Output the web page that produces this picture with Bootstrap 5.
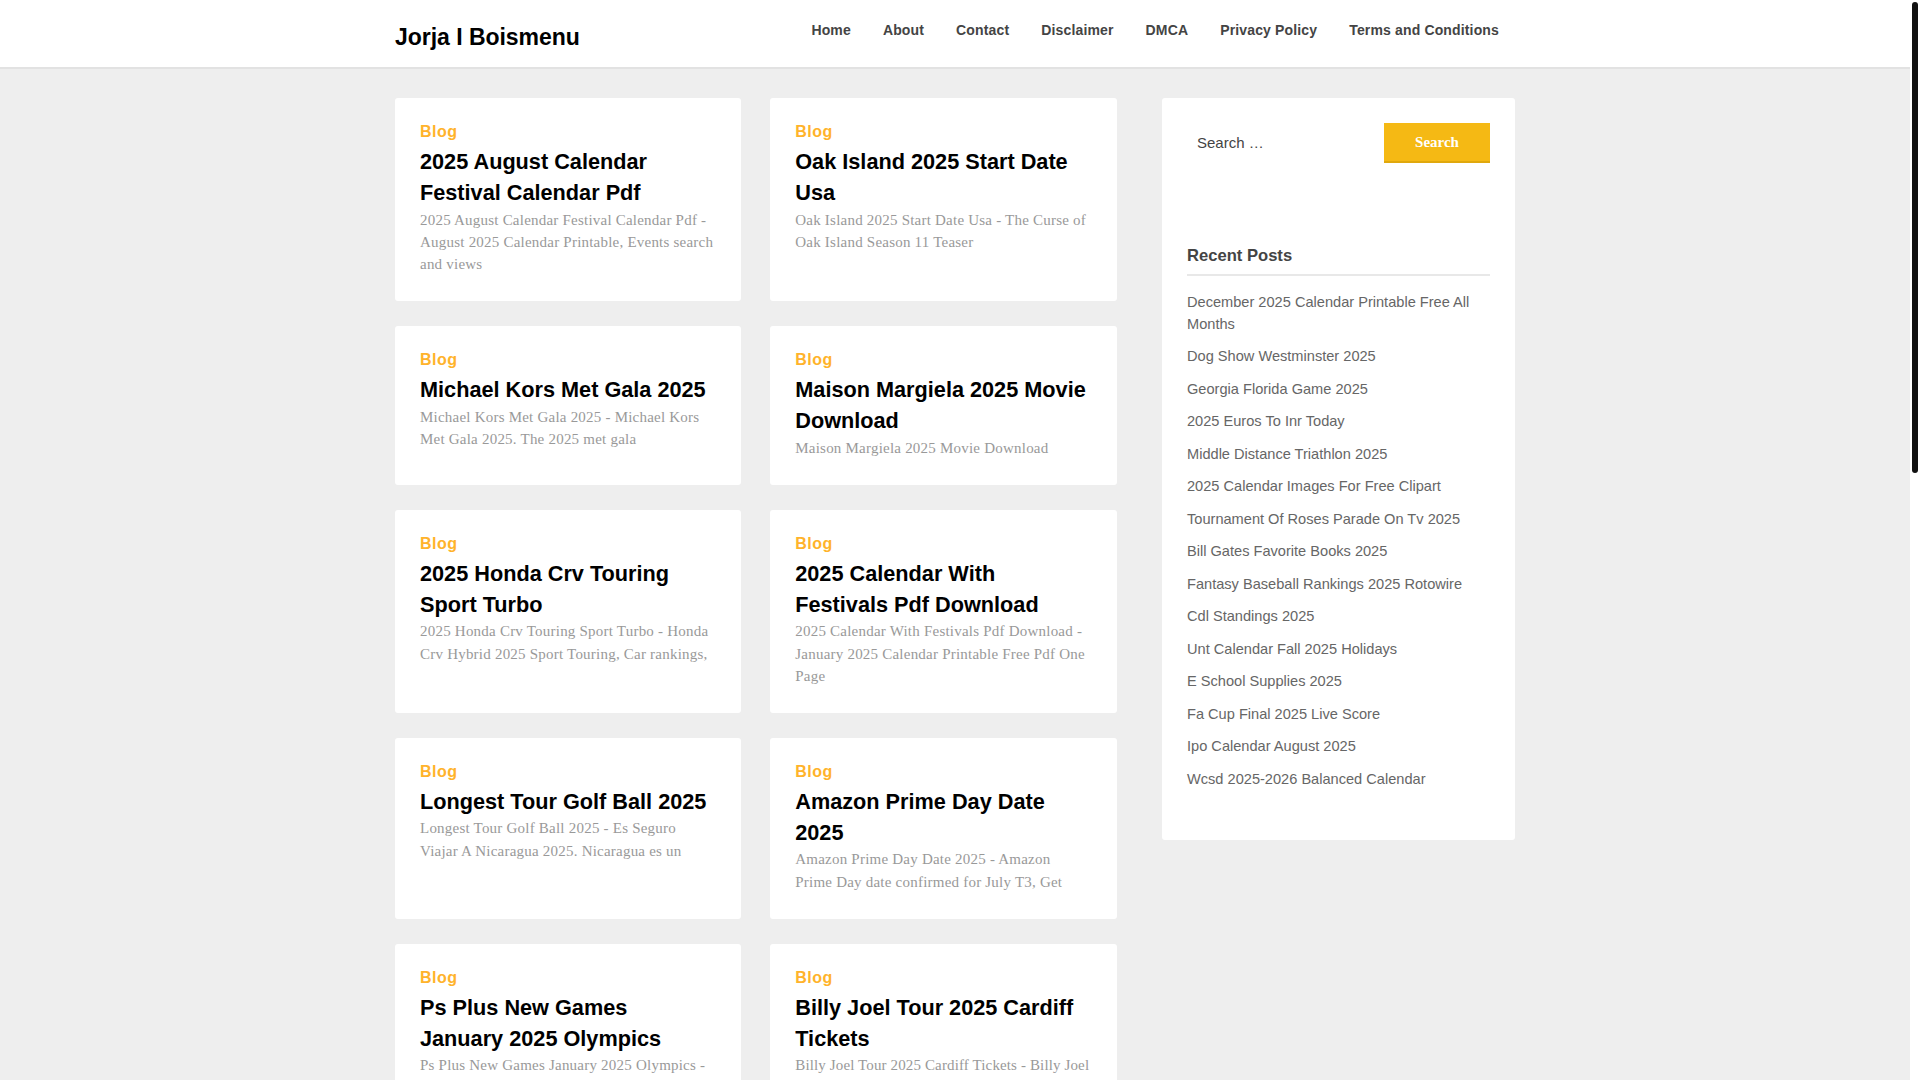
<!DOCTYPE html>
<html lang="en">
<head>
<meta charset="utf-8">
<title>Jorja I Boismenu</title>
<link href="https://cdn.jsdelivr.net/npm/bootstrap@5.3.0/dist/css/bootstrap.min.css" rel="stylesheet">
<style>
body{background:#eee;font-family:"Liberation Sans",Arial,sans-serif;color:#444;padding-right:10px}
.page-track{position:fixed;top:0;right:0;bottom:0;width:10px;background:#fff;z-index:5}
.page-thumb{width:6px;height:471px;margin:2px 0 0 2px;background:#111;border-radius:3px}
.site-wrap{width:1120px;margin:0 auto}
.site-head{background:#fff;height:69px;border-bottom:2px solid #e2e2e2}
.site-logo{font-size:23px;font-weight:700;color:#000;text-decoration:none;line-height:1;margin-top:26px;letter-spacing:-.03px}
.top-link{font-size:14px;font-weight:700;color:#444;text-decoration:none;padding:0 16px;letter-spacing:.15px;line-height:1;margin-top:23px}
.site-body{padding-top:29px;gap:45.5px}
.post-col{width:721.5px}
.post-grid{--bs-gutter-x:29px;--bs-gutter-y:25px}
.post-box{background:#fff;border-radius:3px;padding:22px 25px 25.5px;height:100%}
.post-cat{font-size:16px;font-weight:700;letter-spacing:.5px;color:#ffb32b;text-decoration:none;line-height:24px;display:block}
.post-title{font-size:21.7px;font-weight:700;line-height:31px;color:#000;margin:2px 0 .5px}
.post-text{font-family:"Liberation Serif",serif;font-size:15px;line-height:22.4px;color:#999;letter-spacing:.22px;margin:0}
.post-text.text-snug{letter-spacing:.13px}
.side-box{background:#fff;border-radius:3px;width:353px;padding:25px;height:742px}
.search-field{border:0;background:transparent;padding:0 0 0 10px;width:100%;font-size:15px;color:#444;outline:0}
.search-field::placeholder{color:#444;opacity:1}
.search-go{background:#f5b914;border:0;border-bottom:2px solid #e0a80d;border-radius:0;width:106px;height:40px;flex:none;font-family:"Liberation Serif",serif;font-weight:700;font-size:15px;color:#fff;padding:0}
.side-title{font-size:16.6px;font-weight:700;color:#444;margin:81px 0 0;padding-bottom:5.5px;border-bottom:2px solid #e8e8e8;line-height:24px}
.side-links{list-style:none;margin:15px 0 0;padding:0;font-size:14.6px;line-height:22px}
.side-links li{margin-bottom:10.5px}
.side-links a{color:#666;text-decoration:none}
</style>
</head>
<body>
<div class="page-track"><div class="page-thumb"></div></div>
<header class="site-head">
  <div class="site-wrap d-flex justify-content-between align-items-start">
    <a class="site-logo" href="#">Jorja I Boismenu</a>
    <nav class="d-flex">
      <a class="top-link" href="#">Home</a>
      <a class="top-link" href="#">About</a>
      <a class="top-link" href="#">Contact</a>
      <a class="top-link" href="#">Disclaimer</a>
      <a class="top-link" href="#">DMCA</a>
      <a class="top-link" href="#">Privacy Policy</a>
      <a class="top-link" href="#">Terms and Conditions</a>
    </nav>
  </div>
</header>
<div class="site-wrap site-body d-flex align-items-start">
  <main class="post-col">
    <div class="row post-grid">
      <div class="col-6"><article class="post-box"><a class="post-cat" href="#">Blog</a><h2 class="post-title">2025 August Calendar Festival Calendar Pdf</h2><p class="post-text">2025 August Calendar Festival Calendar Pdf - August 2025 Calendar Printable, Events search and views</p></article></div>
      <div class="col-6"><article class="post-box"><a class="post-cat" href="#">Blog</a><h2 class="post-title">Oak Island 2025 Start Date Usa</h2><p class="post-text">Oak Island 2025 Start Date Usa - The Curse of Oak Island Season 11 Teaser</p></article></div>
      <div class="col-6"><article class="post-box"><a class="post-cat" href="#">Blog</a><h2 class="post-title">Michael Kors Met Gala 2025</h2><p class="post-text">Michael Kors Met Gala 2025 - Michael Kors Met Gala 2025. The 2025 met gala</p></article></div>
      <div class="col-6"><article class="post-box"><a class="post-cat" href="#">Blog</a><h2 class="post-title">Maison Margiela 2025 Movie Download</h2><p class="post-text">Maison Margiela 2025 Movie Download</p></article></div>
      <div class="col-6"><article class="post-box"><a class="post-cat" href="#">Blog</a><h2 class="post-title">2025 Honda Crv Touring Sport Turbo</h2><p class="post-text">2025 Honda Crv Touring Sport Turbo - Honda Crv Hybrid 2025 Sport Touring, Car rankings,</p></article></div>
      <div class="col-6"><article class="post-box"><a class="post-cat" href="#">Blog</a><h2 class="post-title">2025 Calendar With Festivals Pdf Download</h2><p class="post-text">2025 Calendar With Festivals Pdf Download - January 2025 Calendar Printable Free Pdf One Page</p></article></div>
      <div class="col-6"><article class="post-box"><a class="post-cat" href="#">Blog</a><h2 class="post-title">Longest Tour Golf Ball 2025</h2><p class="post-text">Longest Tour Golf Ball 2025 - Es Seguro Viajar A Nicaragua 2025. Nicaragua es un</p></article></div>
      <div class="col-6"><article class="post-box"><a class="post-cat" href="#">Blog</a><h2 class="post-title">Amazon Prime Day Date 2025</h2><p class="post-text">Amazon Prime Day Date 2025 - Amazon Prime&nbsp;Day date confirmed for July T3, Get</p></article></div>
      <div class="col-6"><article class="post-box"><a class="post-cat" href="#">Blog</a><h2 class="post-title">Ps Plus New Games January 2025 Olympics</h2><p class="post-text">Ps Plus New Games January 2025 Olympics -</p></article></div>
      <div class="col-6"><article class="post-box"><a class="post-cat" href="#">Blog</a><h2 class="post-title">Billy Joel Tour 2025 Cardiff Tickets</h2><p class="post-text text-snug">Billy Joel Tour 2025 Cardiff Tickets - Billy Joel</p></article></div>
    </div>
  </main>
  <aside class="side-box">
    <form class="d-flex align-items-center" onsubmit="return false">
      <input class="search-field" type="search" placeholder="Search …">
      <button class="search-go btn" type="submit">Search</button>
    </form>
    <h3 class="side-title">Recent Posts</h3>
    <ul class="side-links">
      <li><a href="#">December 2025 Calendar Printable Free All Months</a></li>
      <li><a href="#">Dog Show Westminster 2025</a></li>
      <li><a href="#">Georgia Florida Game 2025</a></li>
      <li><a href="#">2025 Euros To Inr Today</a></li>
      <li><a href="#">Middle Distance Triathlon 2025</a></li>
      <li><a href="#">2025 Calendar Images For Free Clipart</a></li>
      <li><a href="#">Tournament Of Roses Parade On Tv 2025</a></li>
      <li><a href="#">Bill Gates Favorite Books 2025</a></li>
      <li><a href="#">Fantasy Baseball Rankings 2025 Rotowire</a></li>
      <li><a href="#">Cdl Standings 2025</a></li>
      <li><a href="#">Unt Calendar Fall 2025 Holidays</a></li>
      <li><a href="#">E School Supplies 2025</a></li>
      <li><a href="#">Fa Cup Final 2025 Live Score</a></li>
      <li><a href="#">Ipo Calendar August 2025</a></li>
      <li><a href="#">Wcsd 2025-2026 Balanced Calendar</a></li>
    </ul>
  </aside>
</div>
<script src="https://cdn.jsdelivr.net/npm/bootstrap@5.3.0/dist/js/bootstrap.bundle.min.js"></script>
</body>
</html>
